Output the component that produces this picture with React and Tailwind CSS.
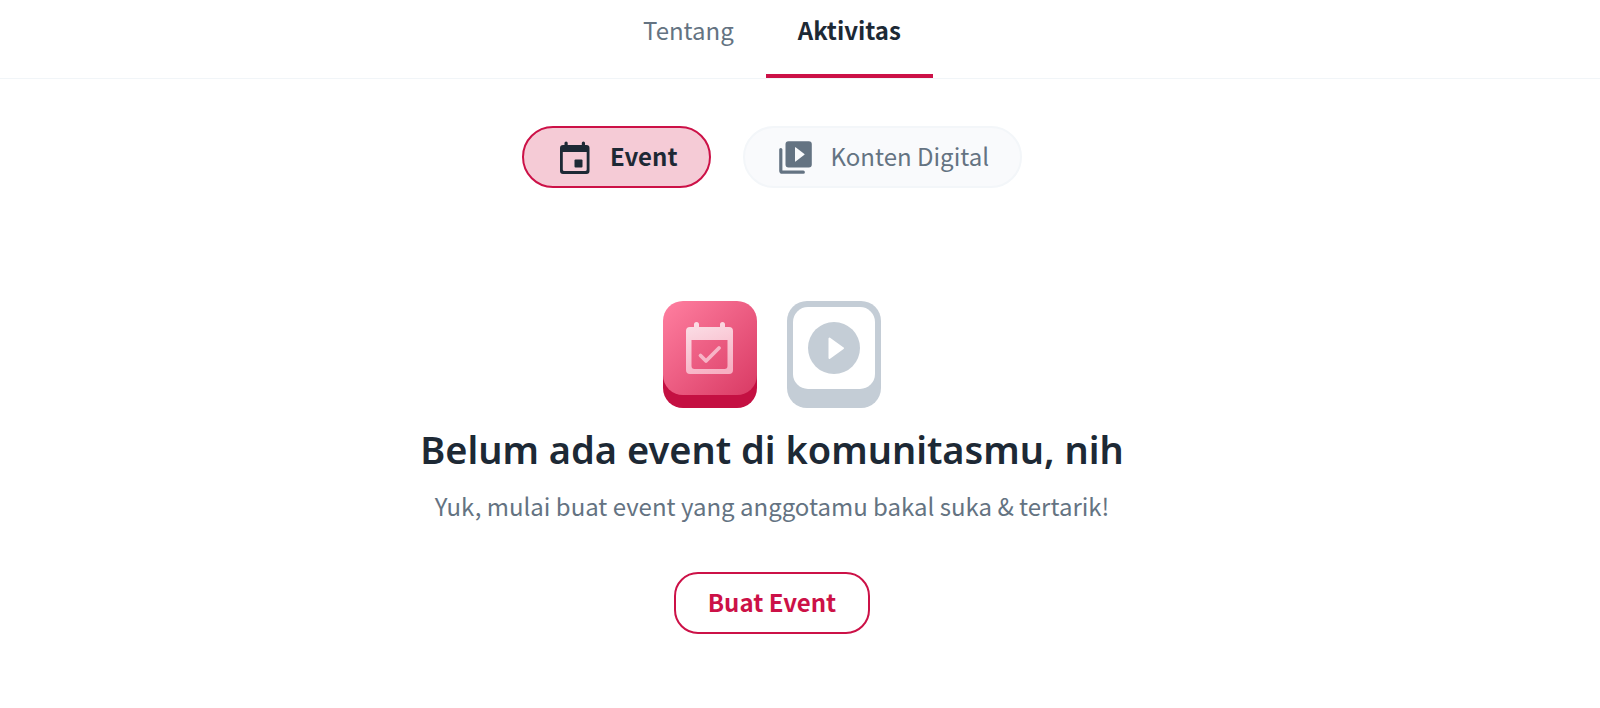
import React, { useState } from "react"

const tabs = [
  { id: "tentang", label: "Tentang" },
  { id: "aktivitas", label: "Aktivitas" },
]

const CalendarIcon = () => (
  <svg className="size-[39px] shrink-0" viewBox="0 0 39 39" fill="currentColor" aria-hidden="true">
    <path
      fillRule="evenodd"
      d="M8 7h23.500a3 3 0 0 1 3 3v23a3 3 0 0 1-3 3H8a3 3 0 0 1-3-3V10a3 3 0 0 1 3-3zM7.800 14v17.500a1.500 1.500 0 0 0 1.500 1.500h20.900a1.500 1.500 0 0 0 1.500-1.500V14z"
    />
    <rect x="9.500" y="3.500" width="3.200" height="7" rx="1.600" />
    <rect x="26.800" y="3.500" width="3.200" height="7" rx="1.600" />
    <rect x="19.500" y="21.500" width="8" height="8" rx="1" />
  </svg>
)

const LibraryIcon = () => (
  <svg className="size-[39px] shrink-0" viewBox="0 0 39 39" fill="currentColor" aria-hidden="true">
    <path
      fillRule="evenodd"
      d="M12.500 3.200h20.300a3 3 0 0 1 3 3v20.300a3 3 0 0 1-3 3H12.500a3 3 0 0 1-3-3V6.200a3 3 0 0 1 3-3zM19 9.600v13.600a.4.4 0 0 0 .6.4l8.800-6.800a.5.5 0 0 0 0-.8l-8.800-6.800a.4.4 0 0 0-.6.4z"
    />
    <path
      d="M4.800 11.500v21.200a1.500 1.500 0 0 0 1.500 1.500h21"
      fill="none"
      stroke="currentColor"
      strokeWidth="3.200"
      strokeLinecap="round"
    />
  </svg>
)

const EventArt = () => (
  <svg className="h-[107px] w-[94px]" viewBox="0 0 94 107" aria-hidden="true">
    <defs>
      <linearGradient id="tile" x1="0" y1="0" x2="1" y2="1">
        <stop offset="0" stopColor="#ff7fa0" />
        <stop offset="1" stopColor="#d93a64" />
      </linearGradient>
      <linearGradient id="sheet" x1="0.300" y1="0" x2="0.600" y2="1">
        <stop offset="0" stopColor="#fbdde5" />
        <stop offset="1" stopColor="#f7b0c3" />
      </linearGradient>
    </defs>
    <rect y="13" width="94" height="94" rx="20" fill="#c41042" />
    <rect width="94" height="94" rx="20" fill="url(#tile)" />
    <path
      fill="url(#sheet)"
      fillRule="evenodd"
      d="M31 26v-2.500a2.500 2.500 0 0 1 5 0V26h21v-2.500a2.500 2.500 0 0 1 5 0V26h4a4 4 0 0 1 4 4v39a4 4 0 0 1-4 4H27a4 4 0 0 1-4-4V30a4 4 0 0 1 4-4zM28.500 39v26a3 3 0 0 0 3 3h30a3 3 0 0 0 3-3V39z"
    />
    <path
      d="M37.500 54.500l5.500 5.500 13-13"
      fill="none"
      stroke="#f7b4c6"
      strokeWidth="3.800"
      strokeLinecap="round"
      strokeLinejoin="round"
    />
  </svg>
)

const VideoArt = () => (
  <svg className="h-[107px] w-[94px]" viewBox="0 0 94 107" aria-hidden="true">
    <rect width="94" height="107" rx="20" fill="#c4cdd6" />
    <rect x="6" y="6" width="82" height="82" rx="15" fill="#fff" />
    <circle cx="47" cy="47" r="26" fill="#c4cdd6" />
    <path d="M42.500 37.500v19.500l13.500-9.800z" fill="#fff" stroke="#fff" strokeWidth="2" strokeLinejoin="round" />
  </svg>
)

const kinds = [
  { id: "event", label: "Event", Icon: CalendarIcon },
  { id: "konten", label: "Konten Digital", Icon: LibraryIcon },
]

const App = () => {
  const [tab, setTab] = useState("aktivitas")
  const [kind, setKind] = useState("event")

  return (
    <div className="min-h-screen bg-white font-['Noto_Sans_CJK_SC',sans-serif] text-2xl leading-9 text-[#647382]">
      {/* Tabs */}
      <nav className="flex justify-center border-b border-[#f1f5f8] pr-14">
        {tabs.map(({ id, label }) => (
          <button
            key={id}
            type="button"
            onClick={() => setTab(id)}
            className={`border-b-4 px-8 pt-3 pb-[26px] ${
              tab === id ? "border-[#cc1147] font-bold text-[#1d2935]" : "border-transparent"
            }`}
          >
            {label}
          </button>
        ))}
      </nav>

      <main className="flex flex-col items-center pt-[47px] pr-14">
        {/* Activity filter */}
        <div className="flex gap-8">
          {kinds.map(({ id, label, Icon }) => (
            <button
              key={id}
              type="button"
              onClick={() => setKind(id)}
              className={`flex h-[62px] items-center gap-4 rounded-full border-2 px-[31px] ${
                kind === id
                  ? "border-[#cc1147] bg-[#f5cbd6] font-bold text-[#1d2935]"
                  : "border-[#f3f6f9] bg-[#f9fafc]"
              }`}
            >
              <Icon />
              <span className="pb-0.5">{label}</span>
            </button>
          ))}
        </div>

        {/* Empty state */}
        <div className="flex gap-[30px] pt-[113px]">
          <EventArt />
          <VideoArt />
        </div>
        <h1 className="mt-4 text-center font-['Noto_Sans',sans-serif] text-[38px] leading-[50px] font-semibold text-[#1d2935]">
          Belum ada event di komunitasmu, nih
        </h1>
        <p className="mt-3.5 text-center">Yuk, mulai buat event yang anggotamu bakal suka &amp; tertarik!</p>
        <button
          type="button"
          className="mt-12 h-[62px] rounded-3xl border-2 border-[#cc1147] px-8 pb-0.5 font-bold text-[#cc1147]"
        >
          Buat Event
        </button>
      </main>
    </div>
  )
}

export default App
